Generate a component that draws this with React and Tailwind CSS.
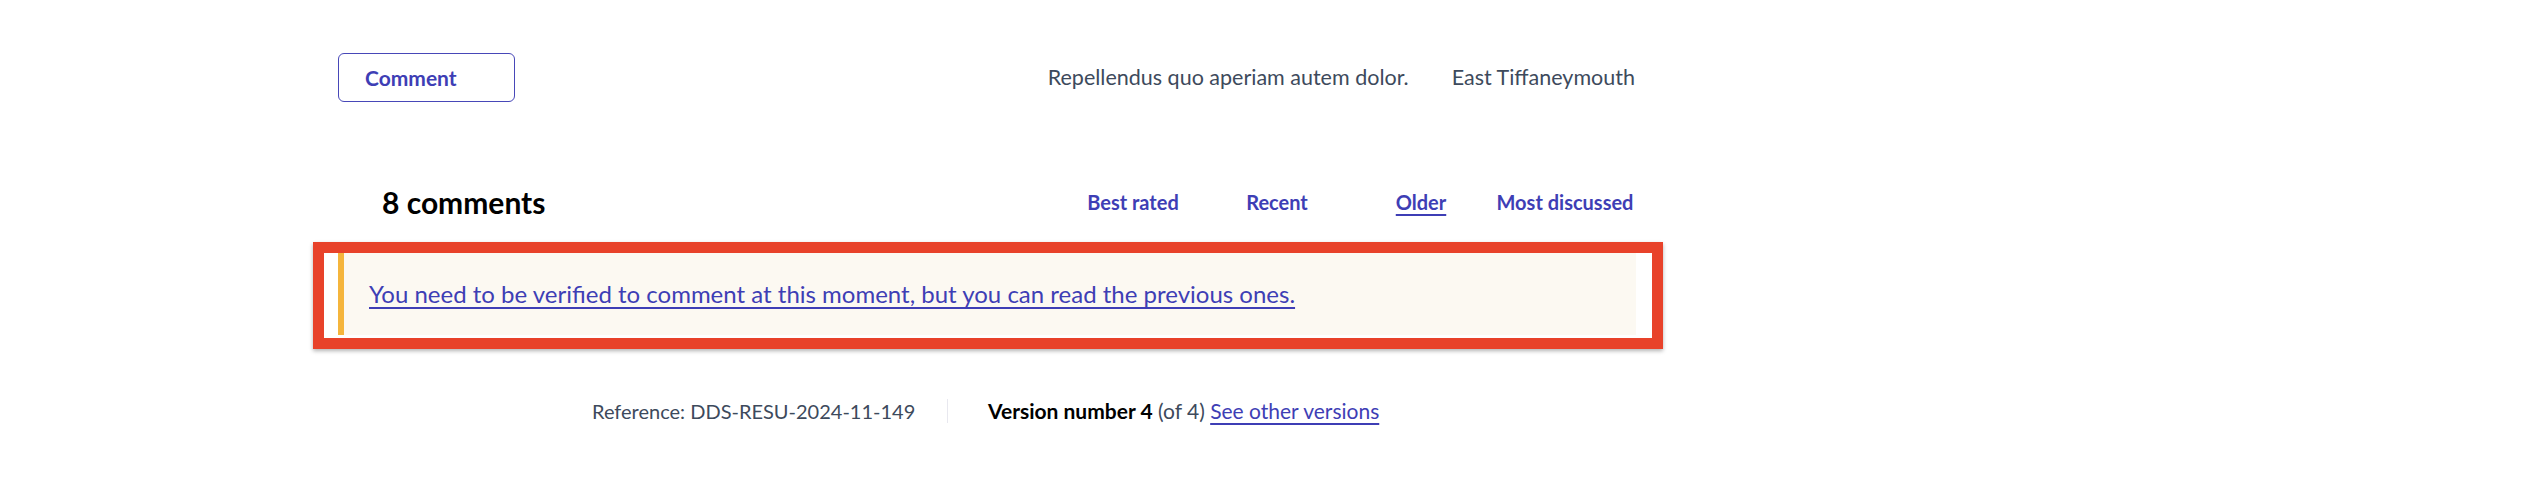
import React from "react";

const sortLinks = [
  { label: "Best rated", active: false },
  { label: "Recent", active: false },
  { label: "Older", active: true },
  { label: "Most discussed", active: false },
];

const App = () => {
  return (
    <div className="w-[2538px] h-[486px] bg-white font-['Lato',sans-serif] text-[#3d4a5c]">
      <div className="ml-[338px] w-[1297px] pt-[53px]">
        {/* top row */}
        <div className="flex items-center h-[49px]">
          <button className="w-[177px] h-[49px] border border-[#4747b8] rounded-[6px] text-left pl-[26px] text-[21px] font-bold text-[#3e3eb5]">
            Comment
          </button>
          <div className="ml-auto flex items-center gap-[43px] text-[21.5px] whitespace-nowrap">
            <span>Repellendus quo aperiam autem dolor.</span>
            <span>East Tiffaneymouth</span>
          </div>
        </div>

        {/* comments header */}
        <div className="flex items-center h-[40px] mt-[80px]">
          <h2 className="pl-[44px] text-[30px] font-bold text-black">8 comments</h2>
          <div className="ml-auto grid grid-cols-4 -mr-[2px]">
            {sortLinks.map((link) => (
              <a
                key={link.label}
                href="#"
                className={`w-[144px] text-center whitespace-nowrap text-[20px] font-bold text-[#3e3eb5] ${
                  link.active ? "underline underline-offset-4" : "no-underline"
                }`}
              >
                {link.label}
              </a>
            ))}
          </div>
        </div>

        {/* callout with annotation frame */}
        <div className="mt-[20px] -ml-[25px] -mr-[28px] border-[11px] border-[#e8422a] pl-[14px] pr-[16px] pb-[3px] shadow-[0_2px_4px_rgba(0,0,0,0.3)]">
          <div className="h-[82px] bg-[#fcf9f2] border-l-[6px] border-[#f5b53c] pl-[25px] flex items-center">
            <a href="#" className="text-[24px] text-[#3e3eb5] underline underline-offset-4">
              You need to be verified to comment at this moment, but you can read the previous ones.
            </a>
          </div>
        </div>

        {/* footer */}
        <div className="flex items-center mt-[46px] pl-[254px] whitespace-nowrap">
          <span className="w-[355px] text-[20px]">Reference: DDS-RESU-2024-11-149</span>
          <span className="w-px h-[24px] bg-[#e8e8ef]"></span>
          <span className="ml-[40px] text-[21px]">
            <strong className="font-bold text-black">Version number 4</strong>{" "}
            (of 4){" "}
            <a href="#" className="text-[#3e3eb5] underline underline-offset-4">
              See other versions
            </a>
          </span>
        </div>
      </div>
    </div>
  );
};

export default App;
